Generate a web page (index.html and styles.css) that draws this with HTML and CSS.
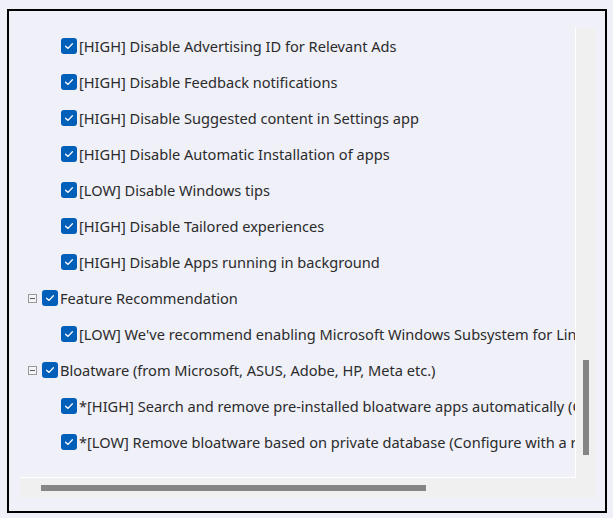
FILE: index.html
```html
<!DOCTYPE html>
<html>
<head>
<meta charset="utf-8">
<link rel="stylesheet" href="styles.css">
</head>
<body>
<div class="frame">
  <div class="tree">
    <div class="content">
      <ul class="rows">
        <li class="row child"><span class="cb"><svg viewBox="0 0 16 16"><path d="M4.6 8.2 L7 10.4 L11.4 5.8"/></svg></span><span class="label">[HIGH] Disable Advertising ID for Relevant Ads</span></li>
        <li class="row child"><span class="cb"><svg viewBox="0 0 16 16"><path d="M4.6 8.2 L7 10.4 L11.4 5.8"/></svg></span><span class="label">[HIGH] Disable Feedback notifications</span></li>
        <li class="row child"><span class="cb"><svg viewBox="0 0 16 16"><path d="M4.6 8.2 L7 10.4 L11.4 5.8"/></svg></span><span class="label">[HIGH] Disable Suggested content in Settings app</span></li>
        <li class="row child"><span class="cb"><svg viewBox="0 0 16 16"><path d="M4.6 8.2 L7 10.4 L11.4 5.8"/></svg></span><span class="label">[HIGH] Disable Automatic Installation of apps</span></li>
        <li class="row child"><span class="cb"><svg viewBox="0 0 16 16"><path d="M4.6 8.2 L7 10.4 L11.4 5.8"/></svg></span><span class="label">[LOW] Disable Windows tips</span></li>
        <li class="row child"><span class="cb"><svg viewBox="0 0 16 16"><path d="M4.6 8.2 L7 10.4 L11.4 5.8"/></svg></span><span class="label">[HIGH] Disable Tailored experiences</span></li>
        <li class="row child"><span class="cb"><svg viewBox="0 0 16 16"><path d="M4.6 8.2 L7 10.4 L11.4 5.8"/></svg></span><span class="label">[HIGH] Disable Apps running in background</span></li>
        <li class="row parent"><span class="exp"></span><span class="cb"><svg viewBox="0 0 16 16"><path d="M4.6 8.2 L7 10.4 L11.4 5.8"/></svg></span><span class="label">Feature Recommendation</span></li>
        <li class="row child"><span class="cb"><svg viewBox="0 0 16 16"><path d="M4.6 8.2 L7 10.4 L11.4 5.8"/></svg></span><span class="label">[LOW] We've recommend enabling Microsoft Windows Subsystem for Linux</span></li>
        <li class="row parent"><span class="exp"></span><span class="cb"><svg viewBox="0 0 16 16"><path d="M4.6 8.2 L7 10.4 L11.4 5.8"/></svg></span><span class="label">Bloatware (from Microsoft, ASUS, Adobe, HP, Meta etc.)</span></li>
        <li class="row child"><span class="cb"><svg viewBox="0 0 16 16"><path d="M4.6 8.2 L7 10.4 L11.4 5.8"/></svg></span><span class="label">*[HIGH] Search and remove pre-installed bloatware apps automatically (Configure)</span></li>
        <li class="row child"><span class="cb"><svg viewBox="0 0 16 16"><path d="M4.6 8.2 L7 10.4 L11.4 5.8"/></svg></span><span class="label">*[LOW] Remove bloatware based on private database (Configure with a right-click)</span></li>
      </ul>
    </div>
    <div class="vscroll"><div class="vthumb"></div></div>
    <div class="hscroll"><div class="hthumb"></div></div>
    <div class="corner"></div>
  </div>
</div>
</body>
</html>
```

FILE: styles.css
```css
html, body {
  margin: 0;
  padding: 0;
  background: #eff0f8;
}
body {
  padding: 9px 6px 0 7px;
  font-family: "Noto Sans", "Open Sans", sans-serif;
}
.frame {
  border: 2px solid #000;
  padding: 17px 9px 14px 11px;
  box-sizing: border-box;
  width: 600px;
  height: 504px;
}
.tree {
  display: grid;
  grid-template-columns: 555px 1px 20px;
  grid-template-rows: 449px 1px 20px;
  width: 576px;
  height: 470px;
  background: #f0f0f0;
}
.content {
  grid-column: 1 / 3;
  grid-row: 1 / 3;
  overflow: hidden;
  background: #eff0f8;
  border-right: 1px solid #fff;
  border-bottom: 1px solid #fff;
}
.rows {
  list-style: none;
  margin: 0;
  padding: 0;
}
.row {
  height: 36px;
  display: flex;
  align-items: center;
  white-space: nowrap;
}
.row.child {
  padding-left: 41px;
}
.row.parent {
  padding-left: 8px;
}
.exp {
  width: 7px;
  height: 7px;
  border: 1px solid #9a9a9a;
  background: #f4f4f4;
  position: relative;
  margin-right: 5px;
  flex: none;
}
.exp::after {
  content: "";
  position: absolute;
  left: 1px;
  right: 1px;
  top: 3px;
  height: 1px;
  background: #5a5a5a;
}
.cb {
  width: 16px;
  height: 16px;
  border-radius: 3px;
  background: #005fb8;
  flex: none;
  display: flex;
  margin-right: 2px;
  margin-top: -1px;
}
.cb svg {
  width: 16px;
  height: 16px;
}
.cb path {
  fill: none;
  stroke: #fff;
  stroke-width: 1.3;
  stroke-linecap: round;
  stroke-linejoin: round;
}
.label {
  font-size: 14.6px;
  color: #2b2b2b;
}
.vscroll {
  grid-column: 3;
  grid-row: 1 / 3;
  position: relative;
}
.vthumb {
  position: absolute;
  left: 7px;
  width: 6px;
  top: 332px;
  height: 95px;
  background: #858585;
}
.hscroll {
  grid-column: 1 / 3;
  grid-row: 3;
  position: relative;
}
.hthumb {
  position: absolute;
  left: 21px;
  width: 385px;
  top: 7px;
  height: 6px;
  background: #858585;
}
.corner {
  grid-column: 3;
  grid-row: 3;
}
```
